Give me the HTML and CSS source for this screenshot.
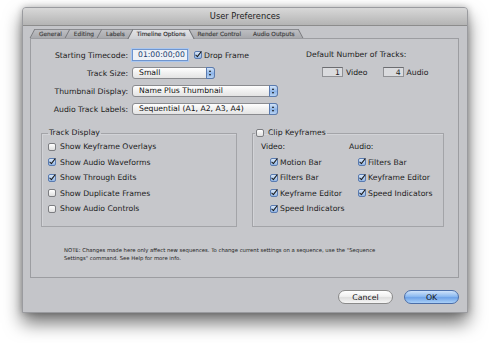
FILE: index.html
```html
<!DOCTYPE html>
<html lang="en">
<head>
  <meta charset="UTF-8">
  <title>User Preferences</title>
  <link rel="stylesheet" href="styles.css">
</head>
<body>
  <div class="window">
    <div class="titlebar">User Preferences</div>
    <div class="content">
      <div class="tabs">
        <div class="tab left">General</div>
        <div class="tab left">Editing</div>
        <div class="tab left">Labels</div>
        <div class="tab active">Timeline Options</div>
        <div class="tab right">Render Control</div>
        <div class="tab right">Audio Outputs</div>
      </div>

      <div class="panel">
        <div class="top">
          <div class="form">
            <div class="lbl">Starting Timecode:</div>
            <div class="ctl">
              <span class="timecode">01:00:00;00</span>
              <span class="cb on"></span>
              <span>Drop Frame</span>
            </div>

            <div class="lbl">Track Size:</div>
            <div class="ctl">
              <div class="popup short">Small<span class="cap"></span></div>
            </div>

            <div class="lbl">Thumbnail Display:</div>
            <div class="ctl">
              <div class="popup">Name Plus Thumbnail<span class="cap"></span></div>
            </div>

            <div class="lbl">Audio Track Labels:</div>
            <div class="ctl">
              <div class="popup">Sequential (A1, A2, A3, A4)<span class="cap"></span></div>
            </div>
          </div>

          <div class="tracks">
            <div class="tracks-title">Default Number of Tracks:</div>
            <div class="tracks-row">
              <span class="num">1</span>
              <span class="tname">Video</span>
              <span class="num">4</span>
              <span>Audio</span>
            </div>
          </div>
        </div>

        <div class="groups">
          <fieldset class="group display">
            <legend>Track Display</legend>
            <div class="item"><span class="cb"></span>Show Keyframe Overlays</div>
            <div class="item"><span class="cb on"></span>Show Audio Waveforms</div>
            <div class="item"><span class="cb on"></span>Show Through Edits</div>
            <div class="item"><span class="cb"></span>Show Duplicate Frames</div>
            <div class="item"><span class="cb"></span>Show Audio Controls</div>
          </fieldset>

          <fieldset class="group keyframes">
            <legend><span class="cb"></span>Clip Keyframes</legend>
            <div class="cols">
              <div class="col video">
                <div class="head">Video:</div>
                <div class="item sub"><span class="cb on"></span>Motion Bar</div>
                <div class="item sub"><span class="cb on"></span>Filters Bar</div>
                <div class="item sub"><span class="cb on"></span>Keyframe Editor</div>
                <div class="item sub"><span class="cb on"></span>Speed Indicators</div>
              </div>
              <div class="col">
                <div class="head">Audio:</div>
                <div class="item sub"><span class="cb on"></span>Filters Bar</div>
                <div class="item sub"><span class="cb on"></span>Keyframe Editor</div>
                <div class="item sub"><span class="cb on"></span>Speed Indicators</div>
              </div>
            </div>
          </fieldset>
        </div>

        <p class="note">NOTE: Changes made here only affect new sequences. To change current settings on a sequence, use the "Sequence<br>Settings" command. See Help for more info.</p>
      </div>

      <div class="actions">
        <button class="btn">Cancel</button>
        <button class="btn default">OK</button>
      </div>
    </div>
  </div>
</body>
</html>
```

FILE: styles.css
```css
html,
body {
  height: 100%;
}

body {
  margin: 0;
  padding-top: 7px;
  box-sizing: border-box;
  background-color: #fff;
  font-family: "DejaVu Sans", sans-serif;
  color: #1c1c1c;
}

.window {
  margin-left: 22px;
  width: 446px;
  height: 306px;
  background-color: #c4c5c9;
  border-radius: 4px 4px 0 0;
  border: 1px solid #9a9b9f;
  box-sizing: border-box;
  box-shadow: 0 10px 18px rgba(0, 0, 0, 0.55), 0 0 7px rgba(0, 0, 0, 0.25);
  display: flex;
  flex-direction: column;
}

.titlebar {
  height: 17px;
  line-height: 17px;
  text-align: center;
  font-size: 8.3px;
  color: #222;
  background: linear-gradient(#d8d8d8, #b4b4b4);
  border-bottom: 1px solid #8c8c8c;
  border-radius: 3px 3px 0 0;
}

.content {
  padding: 3px 8px 0 7px;
  display: flex;
  flex-direction: column;
}

/* tabs */
.tabs {
  display: flex;
  height: 9px;
  padding-left: 3px;
}

.tab {
  position: relative;
  z-index: 1;
  padding: 0 6px;
  font-size: 5.8px;
  line-height: 10px;
  color: #3e3e3e;
  -webkit-text-stroke: 0.15px #3e3e3e;
}

.tab::before {
  content: "";
  position: absolute;
  top: 0;
  bottom: 0;
  left: -1px;
  right: -1px;
  z-index: -1;
  background: linear-gradient(#bdbec2, #a9aaae);
  border-top: 1px solid #8a8b8f;
}

.tab.left::before {
  border-left: 1px solid #77787c;
  transform: skewX(-28deg);
}

.tab.right::before {
  border-right: 1px solid #77787c;
  transform: skewX(28deg);
}

.tab.active {
  z-index: 2;
  color: #222;
}

.tab.active::before,
.tab.active::after {
  content: "";
  position: absolute;
  top: 0;
  bottom: -1px;
  z-index: -1;
  background: linear-gradient(#e2e3e6, #cfd0d4);
  border-top: 1px solid #88898d;
}

.tab.active::before {
  left: -1px;
  right: 45%;
  border-left: 1px solid #6e6f73;
  transform: skewX(-28deg);
}

.tab.active::after {
  left: 45%;
  right: -1px;
  border-right: 1px solid #6e6f73;
  transform: skewX(28deg);
}

/* panel */
.panel {
  box-sizing: border-box;
  height: 240px;
  border: 1px solid #9c9da1;
  background-color: #c6c7cb;
  font-size: 7.7px;
}

.top {
  display: flex;
  gap: 28px;
  padding-top: 7px;
}

.form {
  display: grid;
  grid-template-columns: 97px auto;
  grid-auto-rows: 18px;
  column-gap: 4px;
  align-items: center;
}

.lbl {
  text-align: right;
}

.ctl {
  display: flex;
  align-items: center;
}

.timecode {
  box-sizing: border-box;
  width: 56px;
  height: 12px;
  line-height: 9px;
  padding-left: 5px;
  color: #22406f;
  background-color: #eef1f6;
  border: 1px solid #6f95cf;
  box-shadow: 0 0 0 1px #a9c6ee;
  margin-right: 6px;
}

.cb {
  position: relative;
  display: inline-block;
  box-sizing: border-box;
  width: 8px;
  height: 8px;
  border: 1px solid #7c7d81;
  border-radius: 2px;
  background: linear-gradient(#ffffff, #dedede);
  flex-shrink: 0;
}

.cb.on {
  border-color: #5a7bb0;
  background: linear-gradient(#d7e6f8, #93b7e6);
}

.cb.on::after {
  content: "";
  position: absolute;
  left: 2px;
  top: -2px;
  width: 2px;
  height: 6px;
  border: solid #1b1b1b;
  border-width: 0 1.5px 1.5px 0;
  transform: rotate(38deg);
}

.ctl .cb {
  margin-right: 2px;
}

.popup {
  position: relative;
  box-sizing: border-box;
  width: 146px;
  height: 12px;
  line-height: 10px;
  padding-left: 6px;
  border: 1px solid #8a8b8f;
  border-radius: 3px;
  background: linear-gradient(#ffffff, #f0f0f0 50%, #e4e4e4);
  color: #111;
}

.popup.short {
  width: 83px;
}

.popup .cap {
  position: absolute;
  top: -1px;
  right: -1px;
  width: 9px;
  height: 12px;
  box-sizing: border-box;
  border: 1px solid #5a7bb0;
  border-radius: 0 3px 3px 0;
  background: linear-gradient(#d3e4f8, #8eb5e8 55%, #b9d3f2);
}

.popup .cap::before,
.popup .cap::after {
  content: "";
  position: absolute;
  left: 2px;
  border-left: 1.5px solid transparent;
  border-right: 1.5px solid transparent;
}

.popup .cap::before {
  top: 2px;
  border-bottom: 2px solid #111;
}

.popup .cap::after {
  top: 6px;
  border-top: 2px solid #111;
}

.tracks-title {
  line-height: 18px;
}

.tracks-row {
  display: flex;
  align-items: center;
  height: 16px;
  padding-left: 16px;
}

.num {
  box-sizing: border-box;
  width: 21px;
  height: 10px;
  line-height: 9px;
  padding-right: 2px;
  text-align: right;
  background-color: #dadbde;
  border: 1px solid #909195;
  border-top-color: #6c6d71;
  margin-right: 3px;
}

.tname {
  margin-right: 15px;
}

/* groups */
.groups {
  display: flex;
  gap: 15px;
  padding-left: 10px;
  margin-top: 10px;
}

.group {
  box-sizing: border-box;
  margin: 0;
  min-width: 0;
  border: 1px solid #a3a4a8;
  box-shadow: inset 1px 1px 0 #d2d3d7;
  padding: 1px 0 9px 6px;
}

.group.display {
  width: 196px;
}

.group.keyframes {
  width: 192px;
  padding-left: 2px;
}

.group legend {
  padding: 0 1px;
  line-height: 10px;
  display: flex;
  align-items: center;
  gap: 4px;
}

.item {
  display: flex;
  align-items: center;
  gap: 4px;
  height: 15.5px;
}

.cols {
  display: flex;
  padding-left: 6px;
}

.col.video {
  width: 88px;
}

.head {
  height: 15.5px;
  line-height: 15.5px;
}

.item.sub {
  padding-left: 9px;
  gap: 2px;
}

.note {
  margin: 19px 0 0 33px;
  font-size: 5.3px;
  line-height: 8px;
  color: #222;
}

/* buttons */
.actions {
  display: flex;
  justify-content: flex-end;
  gap: 11px;
  margin-top: 12px;
}

.btn {
  width: 55px;
  height: 14px;
  padding: 0;
  font-family: "DejaVu Sans", sans-serif;
  font-size: 7.8px;
  color: #111;
  border: 1px solid #8a8a8a;
  border-radius: 7px;
  background: linear-gradient(#ffffff, #f0f0f0 45%, #dedede 55%, #f6f6f6);
}

.btn.default {
  border-color: #4b6ea8;
  background: linear-gradient(#cfe3fa, #8dbaf0 45%, #6fa3e8 55%, #a9d0f8);
}
```
